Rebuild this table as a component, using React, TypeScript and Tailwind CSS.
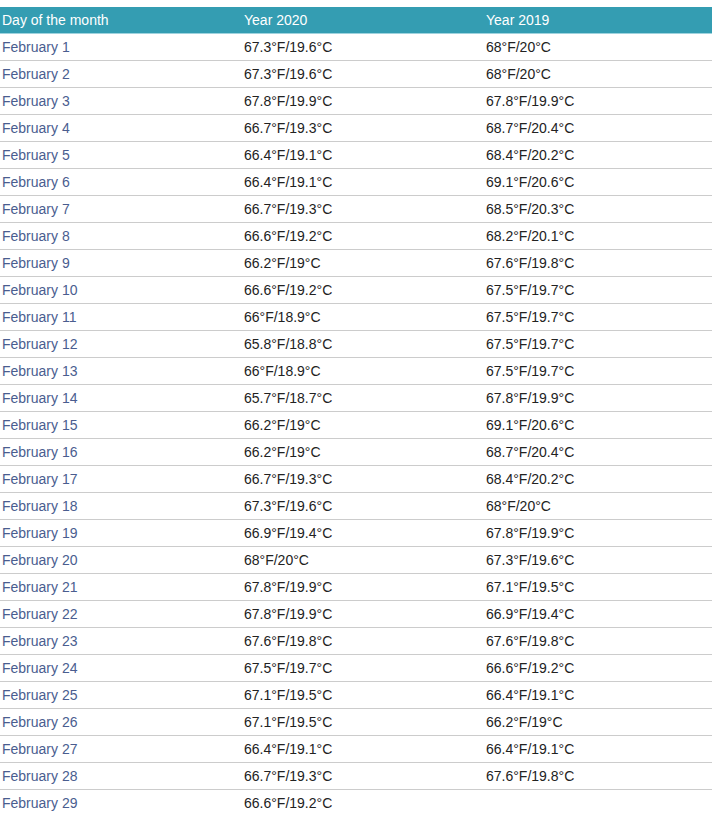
import React from "react";

const rows: [string, string, string][] = [
  ["February 1", "67.3°F/19.6°C", "68°F/20°C"],
  ["February 2", "67.3°F/19.6°C", "68°F/20°C"],
  ["February 3", "67.8°F/19.9°C", "67.8°F/19.9°C"],
  ["February 4", "66.7°F/19.3°C", "68.7°F/20.4°C"],
  ["February 5", "66.4°F/19.1°C", "68.4°F/20.2°C"],
  ["February 6", "66.4°F/19.1°C", "69.1°F/20.6°C"],
  ["February 7", "66.7°F/19.3°C", "68.5°F/20.3°C"],
  ["February 8", "66.6°F/19.2°C", "68.2°F/20.1°C"],
  ["February 9", "66.2°F/19°C", "67.6°F/19.8°C"],
  ["February 10", "66.6°F/19.2°C", "67.5°F/19.7°C"],
  ["February 11", "66°F/18.9°C", "67.5°F/19.7°C"],
  ["February 12", "65.8°F/18.8°C", "67.5°F/19.7°C"],
  ["February 13", "66°F/18.9°C", "67.5°F/19.7°C"],
  ["February 14", "65.7°F/18.7°C", "67.8°F/19.9°C"],
  ["February 15", "66.2°F/19°C", "69.1°F/20.6°C"],
  ["February 16", "66.2°F/19°C", "68.7°F/20.4°C"],
  ["February 17", "66.7°F/19.3°C", "68.4°F/20.2°C"],
  ["February 18", "67.3°F/19.6°C", "68°F/20°C"],
  ["February 19", "66.9°F/19.4°C", "67.8°F/19.9°C"],
  ["February 20", "68°F/20°C", "67.3°F/19.6°C"],
  ["February 21", "67.8°F/19.9°C", "67.1°F/19.5°C"],
  ["February 22", "67.8°F/19.9°C", "66.9°F/19.4°C"],
  ["February 23", "67.6°F/19.8°C", "67.6°F/19.8°C"],
  ["February 24", "67.5°F/19.7°C", "66.6°F/19.2°C"],
  ["February 25", "67.1°F/19.5°C", "66.4°F/19.1°C"],
  ["February 26", "67.1°F/19.5°C", "66.2°F/19°C"],
  ["February 27", "66.4°F/19.1°C", "66.4°F/19.1°C"],
  ["February 28", "66.7°F/19.3°C", "67.6°F/19.8°C"],
  ["February 29", "66.6°F/19.2°C", ""],
];

export default function App() {
  return (
    <div className="w-[712px] bg-white pt-[7px] font-['Liberation_Sans',Arial,sans-serif] text-[14px]">
      <div className="grid h-[27px] grid-cols-[242px_242px_1fr] items-center border-b border-[#9fd3de] bg-[#349db2] pl-[2px] text-white">
        <div>Day of the month</div>
        <div>Year 2020</div>
        <div>Year 2019</div>
      </div>
      {rows.map(([d, a, b]) => (
        <div
          key={d}
          className="grid h-[27px] grid-cols-[242px_242px_1fr] items-center border-b border-[#cccccc] pl-[2px]"
        >
          <div className="text-[#4a5d8f]">{d}</div>
          <div className="text-[#222222]">{a}</div>
          <div className="text-[#222222]">{b}</div>
        </div>
      ))}
    </div>
  );
}
